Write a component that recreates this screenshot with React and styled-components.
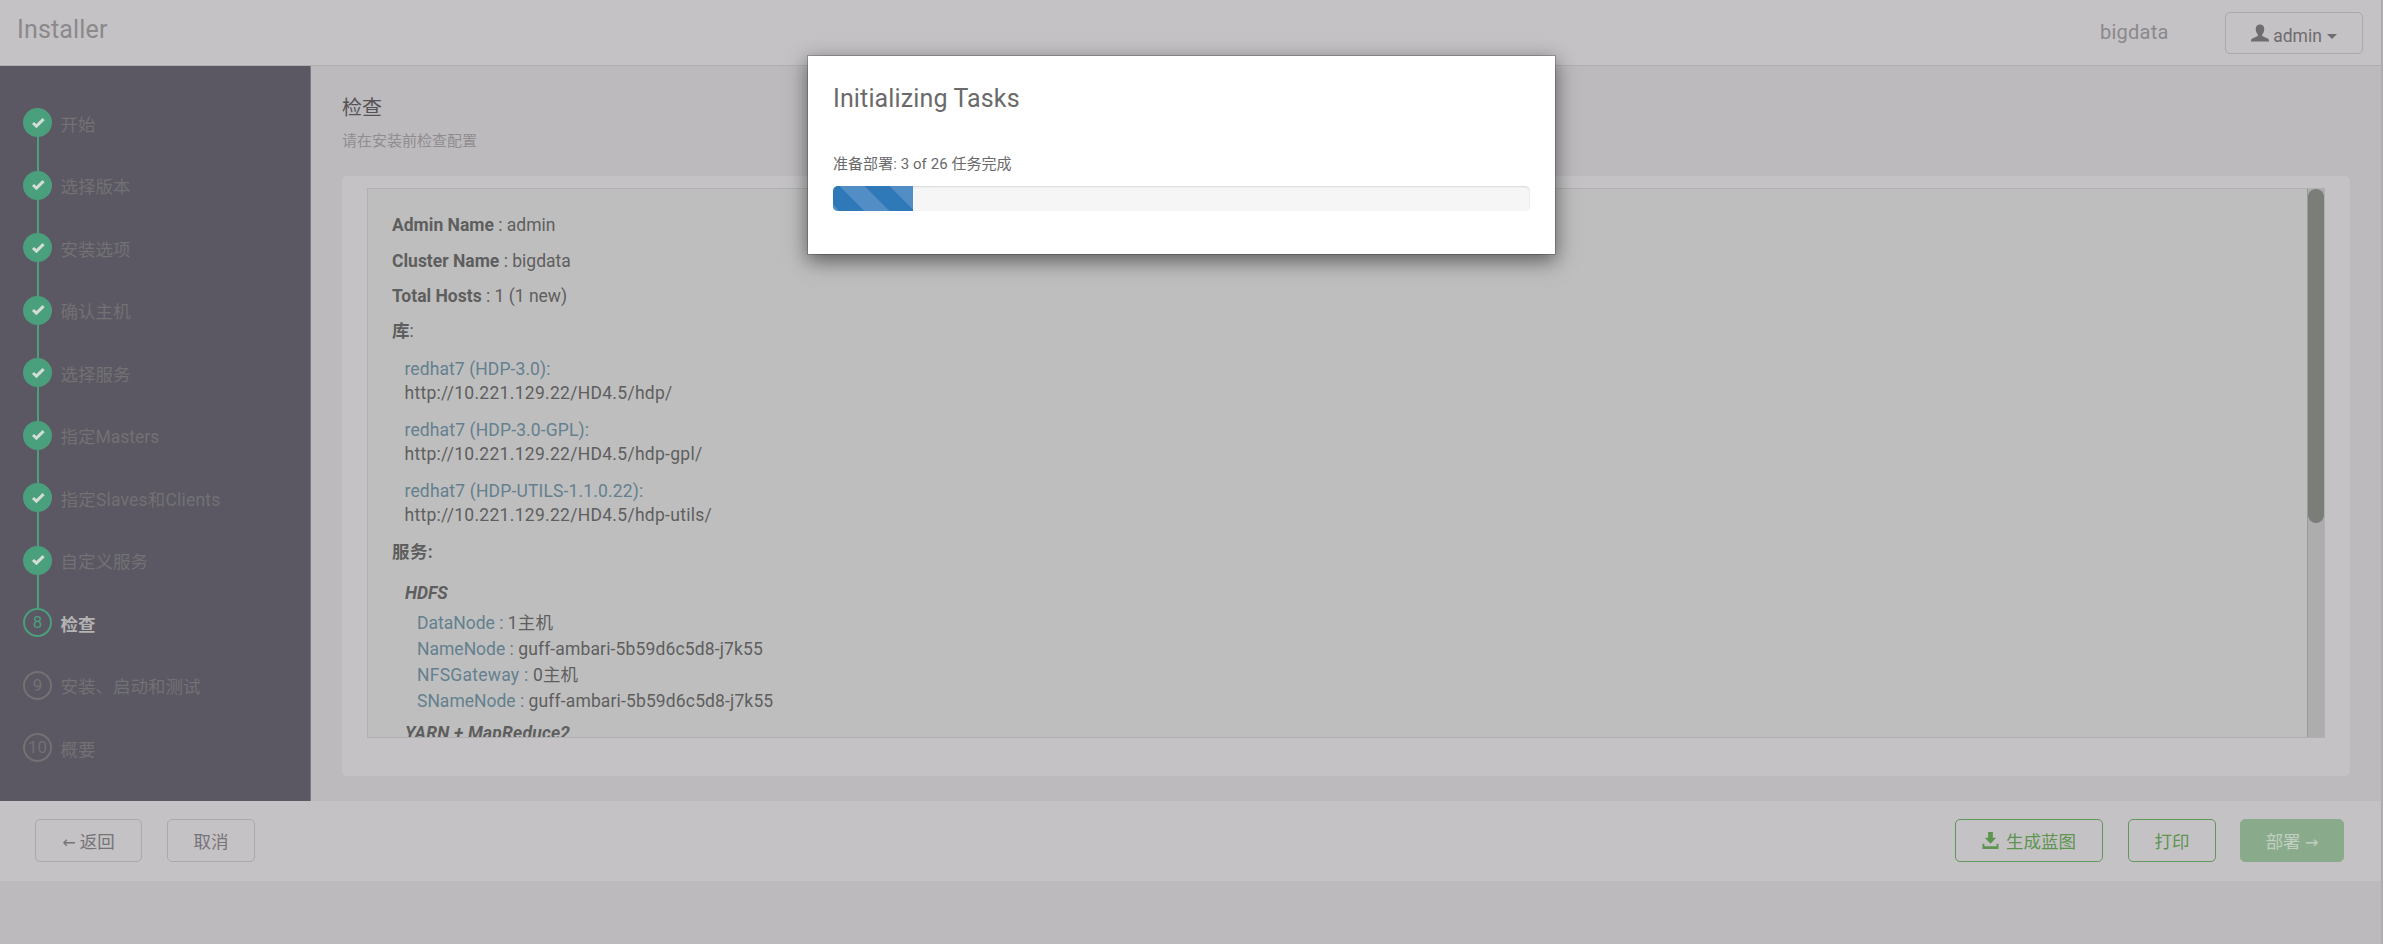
import React from "react";
import styled, { createGlobalStyle, css } from "styled-components";

const Global = createGlobalStyle`
  * { box-sizing: border-box; }
  html, body { margin: 0; padding: 0; }
  body {
    background: #bcbabd;
    color: #5e5e5e;
    font-family: Roboto, "Noto Sans CJK SC", sans-serif;
    font-size: 17.5px;
    line-height: 25px;
    overflow: hidden;
  }
`;

const Page = styled.div`
  width: 100vw;
  height: 944px;
  display: flex;
  flex-direction: column;
  border-right: 2px solid #aeacaf;
`;

const Header = styled.header`
  height: 66px;
  flex: none;
  display: flex;
  align-items: flex-start;
  background: #c4c2c5;
  border-bottom: 1px solid #b0aeb1;
`;

const Brand = styled.div`
  flex: 1;
  padding: 15px 0 0 17px;
  font-size: 25px;
  line-height: 30px;
  color: #8b898c;
  letter-spacing: 0.15px;
`;

const ClusterName = styled.div`
  padding-top: 20px;
  width: 125px;
  font-size: 20px;
  letter-spacing: 0.25px;
  color: #8b898c;
`;

const Button = styled.button`
  height: 43px;
  flex: none;
  width: ${(p) => p.$w}px;
  display: flex;
  align-items: center;
  justify-content: center;
  padding: 4px 0 0;
  border: 1px solid #a9a8aa;
  border-radius: 5px;
  background: transparent;
  color: #767477;
  font: inherit;
  white-space: pre;
  ${(p) => p.$kind === "outline" && css`
    border-color: #5f985a;
    color: #5c9450;
  `}
  ${(p) => p.$kind === "solid" && css`
    margin-left: -1px;
    border-color: #8aab8b;
    background: #8aab8b;
    color: #c0cfc1;
  `}
`;

const UserButton = styled(Button)`
  height: 42px;
  margin: 12px 18px 0 0;
  padding-top: 6px;
  color: #6e6c6f;
`;

const Arrow = styled.span`
  font-family: "DejaVu Sans", sans-serif;
  font-size: 16px;
`;

const Caret = styled.span`
  margin-left: 5px;
  border-top: 5px solid currentColor;
  border-left: 5px solid transparent;
  border-right: 5px solid transparent;
`;

const Main = styled.div`
  height: 735px;
  flex: none;
  display: flex;
`;

const Sidebar = styled.nav`
  width: 311px;
  flex: none;
  padding-top: 42px;
  background: #5b5863;
  border-right: 1px solid #7d7b82;
`;

const Step = styled.div`
  height: 62.5px;
  display: flex;
  align-items: flex-start;
  padding-left: 23px;
`;

const Track = styled.div`
  width: 29px;
  height: 62.5px;
  display: flex;
  flex-direction: column;
  align-items: center;
`;

const Dot = styled.div`
  width: 29px;
  height: 29px;
  flex: none;
  border-radius: 50%;
  display: flex;
  align-items: center;
  justify-content: center;
  font-size: 17px;
  border: 2px solid ${(p) => (p.$state === "todo" ? "#727173" : "#4a9f7c")};
  background: ${(p) => (p.$state === "done" ? "#4a9f7c" : "transparent")};
  color: ${(p) => (p.$state === "done" ? "#d3dcd6" : p.$state === "active" ? "#4a9f7c" : "#727173")};
`;

const Connector = styled.div`
  width: 2px;
  flex: 1;
  background: #4a9f7c;
`;

const StepLabel = styled.span`
  margin: 4.5px 0 0 8.5px;
  letter-spacing: ${(p) => p.$ls || 0}px;
  color: ${(p) => (p.$active ? "#b4b3b4" : "#727173")};
  font-weight: ${(p) => (p.$active ? 700 : 400)};
`;

const Content = styled.main`
  flex: 1;
  min-width: 0;
  padding: 29px 31px 25px 31px;
  display: flex;
  flex-direction: column;
`;

const Title = styled.h4`
  margin: 0;
  font-size: 20px;
  font-weight: 400;
  line-height: 26px;
  color: #555356;
`;

const Subtitle = styled.p`
  margin: 9px 0 23px;
  font-size: 15px;
  line-height: 23px;
  color: #8f8d90;
`;

const Panel = styled.section`
  height: 600px;
  flex: none;
  padding: 12px 25px 38px;
  border-radius: 5px;
  background: #c4c2c5;
`;

const Review = styled.div`
  height: 550px;
  display: flex;
  border: 1px solid #b0b0b0;
  background: #bebebe;
  overflow: hidden;
`;

const ReviewBody = styled.div`
  flex: 1;
  padding: 23.5px 0 0 24px;
  overflow: hidden;
  white-space: pre;
`;

const Line = styled.div`
  height: ${(p) => p.$h}px;
  line-height: 25px;
  margin-top: ${(p) => p.$gap || 0}px;
  padding-left: ${(p) => p.$in || 0}px;
  letter-spacing: ${(p) => p.$ls || 0}px;
  color: ${(p) => (p.$link ? "#64808e" : "inherit")};
  font-weight: ${(p) => (p.$bold ? 700 : 400)};
  font-style: ${(p) => (p.$italic ? "italic" : "normal")};
`;

const Key = styled.span`
  color: #64808e;
  letter-spacing: ${(p) => p.$ls || 0}px;
`;

const Scrollbar = styled.div`
  width: 16px;
  background: #adadad;
  box-shadow: -1px 0 0 #999;
`;

const Thumb = styled.div`
  height: 334px;
  border-radius: 8px;
  background: #7b7d79;
`;

const Footer = styled.footer`
  height: 80px;
  flex: none;
  display: flex;
  align-items: flex-start;
  gap: 25px;
  padding: 18px 37px 0 35px;
  background: #c4c2c5;
`;

const Spacer = styled.div`
  flex: 1;
`;

const Modal = styled.div`
  position: absolute;
  top: 55px;
  left: 807px;
  width: 749px;
  height: 200px;
  padding: 27px 25px 0;
  background: #fff;
  background-clip: padding-box;
  border: 1px solid rgba(0, 0, 0, 0.2);
  box-shadow: 0 6px 19px rgba(0, 0, 0, 0.5);
`;

const ModalTitle = styled.h3`
  margin: 0;
  font-size: 25px;
  font-weight: 400;
  line-height: 32px;
  letter-spacing: 0.13px;
  color: #6a6a6a;
`;

const ModalText = styled.p`
  margin: 36.5px 0 9.5px;
  font-size: 15px;
  line-height: 25px;
  letter-spacing: 0.06px;
  color: #6a6a6a;
`;

const Progress = styled.div`
  height: 25px;
  border-radius: 5px;
  overflow: hidden;
  background: #f6f6f6;
  box-shadow: inset 0 1px 2px rgba(0, 0, 0, 0.12);
`;

const Bar = styled.div`
  height: 25px;
  background-color: #2f79b8;
  background-image: linear-gradient(45deg, #528dc6 25%, transparent 25%, transparent 50%, #528dc6 50%, #528dc6 75%, transparent 75%);
  background-size: 50px 50px;
  background-position: 7px 0;
`;

const CheckIcon = () => (
  <svg width="14" height="12" viewBox="0 0 14 12">
    <path d="M2 6 5.400 9.200 12.600 2.200" fill="none" stroke="currentColor" strokeWidth="3" />
  </svg>
);

const UserIcon = styled((props) => (
  <svg {...props} width="18" height="18" viewBox="0 0 19 18">
    <path
      fill="currentColor"
      d="M9.5 0C12.3 0 14 2 14 4.8c0 2.200-.8 4.500-2.200 5.700v1.600c1.800 1.100 4 1.700 5.800 2.800.8.500 1.400 1.100 1.400 1.900V18H0v-1.200c0-.8.600-1.400 1.400-1.900 1.800-1.100 4-1.700 5.800-2.800v-1.600C5.800 9.300 5 7 5 4.800 5 2 6.700 0 9.500 0Z"
    />
  </svg>
))`
  margin: -6px 4px 0 0;
`;

const DownloadIcon = styled((props) => (
  <svg {...props} width="17" height="17" viewBox="0 0 17 18">
    <path fill="currentColor" d="M6 0h5v6h3.500L8.500 12.500 2.500 6H6ZM0 12.500h2v2.500h13v-2.500h2V18H0Z" />
  </svg>
))`
  margin: -5px 7px 0 0;
`;

const steps = [
  "开始", "选择版本", "安装选项", "确认主机", "选择服务", "指定Masters",
  "指定Slaves和Clients", "自定义服务", "检查", "安装、启动和测试", "概要",
];
const ACTIVE = 8;

const summary = [
  ["Admin Name", "admin", 36],
  ["Cluster Name", "bigdata", 35.5],
  ["Total Hosts", "1 (1 new)", 34.5],
];

const repos = [
  ["redhat7 (HDP-3.0):", "http://10.221.129.22/HD4.5/hdp/", 0.09],
  ["redhat7 (HDP-3.0-GPL):", "http://10.221.129.22/HD4.5/hdp-gpl/", 0.14],
  ["redhat7 (HDP-UTILS-1.1.0.22):", "http://10.221.129.22/HD4.5/hdp-utils/", 0.16],
];

const hdfs = [
  ["DataNode", "1主机", 0],
  ["NameNode", "guff-ambari-5b59d6c5d8-j7k55", 0],
  ["NFSGateway", "0主机", 0.25],
  ["SNameNode", "guff-ambari-5b59d6c5d8-j7k55", 0],
];

export default function App() {
  return (
    <>
      <Global />
      <Page>
        <Header>
          <Brand>Installer</Brand>
          <ClusterName>bigdata</ClusterName>
          <UserButton $w={138}>
            <UserIcon />
            admin
            <Caret />
          </UserButton>
        </Header>
        <Main>
          <Sidebar>
            {steps.map((label, i) => {
              const state = i < ACTIVE ? "done" : i === ACTIVE ? "active" : "todo";
              return (
                <Step key={label}>
                  <Track>
                    <Dot $state={state}>{state === "done" ? <CheckIcon /> : i}</Dot>
                    {state === "done" && <Connector />}
                  </Track>
                  <StepLabel $active={state === "active"} $ls={i === 6 ? 0.2 : 0}>{label}</StepLabel>
                </Step>
              );
            })}
          </Sidebar>
          <Content>
            <Title>检查</Title>
            <Subtitle>请在安装前检查配置</Subtitle>
            <Panel>
              <Review>
                <ReviewBody>
                  {summary.map(([k, v, h]) => (
                    <Line key={k} $h={h}><b>{k}</b> : {v}</Line>
                  ))}
                  <Line $h={38}><b>库</b>:</Line>
                  {repos.map(([name, url, ls]) => (
                    <React.Fragment key={name}>
                      <Line $h={24} $in={12.5} $ls={ls} $link>{name}</Line>
                      <Line $h={37} $in={12.5} $ls={0.29}>{url}</Line>
                    </React.Fragment>
                  ))}
                  <Line $h={41} $bold $ls={0.4}>服务:</Line>
                  <Line $h={30} $in={13} $bold $italic>HDFS</Line>
                  {hdfs.map(([k, v, ls]) => (
                    <Line key={k} $h={26.2} $in={25} $ls={0.14}><Key $ls={ls}>{k} : </Key>{v}</Line>
                  ))}
                  <Line $h={30} $gap={5.5} $in={13} $bold $italic $ls={0.2}>YARN + MapReduce2</Line>
                </ReviewBody>
                <Scrollbar><Thumb /></Scrollbar>
              </Review>
            </Panel>
          </Content>
        </Main>
        <Footer>
          <Button $w={107}><Arrow>←</Arrow> 返回</Button>
          <Button $w={88}>取消</Button>
          <Spacer />
          <Button $w={148} $kind="outline"><DownloadIcon />生成蓝图</Button>
          <Button $w={88} $kind="outline">打印</Button>
          <Button $w={104} $kind="solid">部署 <Arrow>→</Arrow></Button>
        </Footer>
      </Page>
      <Modal>
        <ModalTitle>Initializing Tasks</ModalTitle>
        <ModalText>准备部署: 3 of 26 任务完成</ModalText>
        <Progress><Bar style={{ width: `${(3 / 26) * 100}%` }} /></Progress>
      </Modal>
    </>
  );
}
